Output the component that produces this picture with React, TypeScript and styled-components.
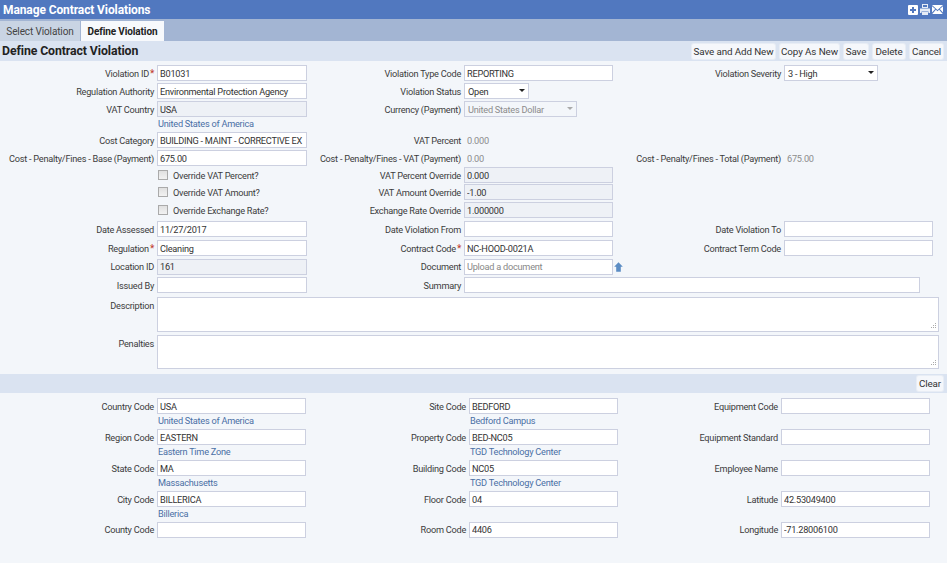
import React from "react";
import styled, { createGlobalStyle } from "styled-components";

const Global = createGlobalStyle`
  html, body { margin: 0; padding: 0; height: 100%; background: #f3f6fa; overflow: hidden; }
  body, input, select, textarea, button { font-family: Roboto, "Noto Sans", sans-serif; font-size: 9.2px; letter-spacing: -0.25px; }
  #root { height: 100%; }
`;

const Page = styled.div`
  width: 947px;
  height: 563px;
  display: flex;
  flex-direction: column;
  background: #f3f6fa;
  color: #3c3c3c;
`;
const TitleBar = styled.header`
  height: 19px;
  flex: none;
  background: #5178bf;
  color: #fff;
  display: flex;
  align-items: center;
  justify-content: space-between;
  padding: 0 4px 0 3px;
  font-size: 12px;
  font-weight: 700;
  letter-spacing: -0.1px;
`;
const TitleIcons = styled.div`
  display: flex;
  gap: 2px;
  align-items: center;
`;
const TabBar = styled.nav`
  height: 22px;
  flex: none;
  background: #a3b5d3;
  display: flex;
  align-items: flex-end;
  gap: 1px;
`;
const Tab = styled.div<{ $active?: boolean }>`
  height: 20px;
  width: ${(p) => (p.$active ? 83 : 80)}px;
  box-sizing: border-box;
  display: flex;
  align-items: center;
  justify-content: center;
  background: ${(p) => (p.$active ? "#f7f9fc" : "#c9d4e3")};
  color: ${(p) => (p.$active ? "#222" : "#444")};
  font-size: 10px;
  letter-spacing: -0.12px;
  font-weight: ${(p) => (p.$active ? 700 : 400)};
`;
const HeaderBand = styled.div`
  height: 20px;
  flex: none;
  background: #dae3f1;
  display: flex;
  align-items: center;
  justify-content: space-between;
  padding: 0 4px 0 2px;
`;
const SectionTitle = styled.h2`
  margin: 0;
  font-size: 12.3px;
  font-weight: 700;
  letter-spacing: -0.1px;
  color: #222;
`;
const Actions = styled.div`
  display: flex;
  gap: 5px;
`;
const ActionButton = styled.button<{ $w: number }>`
  width: ${(p) => p.$w}px;
  height: 15px;
  padding: 0;
  margin: 0;
  border: 0;
  border-radius: 2px;
  background: #f5f7fb;
  box-shadow: 0 0 0 1px #e8edf5;
  color: #333;
  font-size: 9.8px;
  letter-spacing: -0.1px;
  line-height: 15px;
`;
const FormArea = styled.section`
  padding-top: 3px;
  flex: none;
  height: 313px;
  box-sizing: border-box;
`;
const Row = styled.div<{ $h: number; $cols: string }>`
  display: grid;
  grid-template-columns: ${(p) => p.$cols};
  height: ${(p) => p.$h}px;
  align-items: center;
`;
const FieldLabel = styled.label`
  padding-right: 3px;
  white-space: nowrap;
  justify-self: end;
`;
const Required = styled.span`
  color: #c0392b;
  font-size: 10px;
  padding-left: 1px;
`;
const TextBox = styled.input<{ $w?: number }>`
  box-sizing: border-box;
  width: ${(p) => (p.$w ? `${p.$w}px` : "100%")};
  flex: none;
  height: 16px;
  padding: 0 2px;
  margin: 0;
  border: 1px solid #ccd0e0;
  background: ${(p) => (p.readOnly ? "#eef1f6" : "#fff")};
  color: #333;
  outline: none;
  &::placeholder { color: #888; }
`;
const Readout = styled.span`
  color: #8c8c8c;
  padding-left: 3px;
`;
const Link = styled.span`
  color: #4a6fa5;
  padding-left: 1px;
  align-self: start;
  line-height: 11px;
`;
const SelectWrap = styled.div<{ $w: number; $disabled?: boolean }>`
  position: relative;
  width: ${(p) => p.$w}px;
  height: 16px;
  &::after {
    content: "";
    position: absolute;
    right: 4px;
    top: 6px;
    border-left: 3px solid transparent;
    border-right: 3px solid transparent;
    border-top: 3px solid ${(p) => (p.$disabled ? "#aaa" : "#222")};
  }
`;
const Select = styled.select`
  appearance: none;
  box-sizing: border-box;
  width: 100%;
  height: 16px;
  margin: 0;
  padding: 1px 3px 0;
  border: 1px solid #ccd0e0;
  border-radius: 0;
  background: #fff;
  color: #333;
  outline: none;
  &:disabled { color: #8c8c8c; background: #f3f6fa; opacity: 1; }
`;
const CheckLine = styled.label`
  display: flex;
  align-items: center;
  gap: 5px;
`;
const Check = styled.input`
  appearance: none;
  box-sizing: border-box;
  width: 10px;
  height: 10px;
  margin: 0 0 0 1px;
  border: 1px solid #aaa;
  background: linear-gradient(#e0e0e0, #f2f2f2);
`;
const UploadCell = styled.div`
  display: flex;
  align-items: center;
  gap: 1px;
`;
const UploadMark = styled.svg`
  flex: none;
`;
const AreaRow = styled.div<{ $h: number; $mt: number }>`
  display: grid;
  grid-template-columns: 157px 782px;
  height: ${(p) => p.$h}px;
  margin-top: ${(p) => p.$mt}px;
`;
const AreaLabel = styled(FieldLabel)`
  padding-top: 3px;
`;
const AreaField = styled.div`
  position: relative;
`;
const Area = styled.textarea`
  display: block;
  box-sizing: border-box;
  width: 782px;
  height: 100%;
  margin: 0;
  padding: 2px;
  border: 1px solid #ccd0e0;
  background: #fff;
  outline: none;
  resize: none;
`;
const GripMark = styled.svg`
  position: absolute;
  right: 2px;
  bottom: 2px;
`;
const ClearBand = styled(HeaderBand)`
  height: 19px;
  justify-content: flex-end;
`;
const LocationArea = styled.section`
  padding-top: 4px;
`;

const TOP = "157px 150px 157px 149px 171px 149px";
const LOW = "157px 149px 163px 149px 163px 149px";

type C = React.ReactNode;
const lab = (t: string, req?: boolean) => (
  <FieldLabel>
    {t}
    {req && <Required>*</Required>}
  </FieldLabel>
);
const box = (v: string, readOnly?: boolean) => <TextBox value={v} readOnly={readOnly} onChange={() => {}} />;
const ro = (v: string) => <Readout>{v}</Readout>;
const none = <span />;

const PlusIcon = () => (
  <svg width="10" height="10" viewBox="0 0 10 10">
    <path fill="#fff" fillRule="evenodd" d="M1 0h8a1 1 0 0 1 1 1v8a1 1 0 0 1-1 1H1a1 1 0 0 1-1-1V1a1 1 0 0 1 1-1zM4 2v2H2v2h2v2h2V6h2V4H6V2z" />
  </svg>
);
const PrintIcon = () => (
  <svg width="10" height="11" viewBox="0 0 10 11">
    <path fill="#e6ecf6" fillRule="evenodd" d="M2 0h6v4H2zM3 1v2h4V1zM0 4.500h10V9H8.500V7.500h-7V9H0zM2 8h6v3H2z" />
  </svg>
);
const MailIcon = () => (
  <svg width="11" height="9" viewBox="0 0 11 9">
    <path fill="#fff" d="M0 0h11L5.500 5zM0 1.200l3.200 2.900L0 7.600zM11 1.200v6.400L7.800 4.100zM3.900 4.800 5.500 6.200l1.600-1.400L10.800 9H0.200z" />
  </svg>
);
const UploadIcon = () => (
  <UploadMark width="9" height="10" viewBox="0 0 9 10">
    <path fill="#5b8cc4" d="M4.500 0.300 8.800 4.800H6.800V9.800H2.200V4.800H0.200z" />
  </UploadMark>
);
const Grip = () => (
  <GripMark width="7" height="7" viewBox="0 0 7 7">
    <path fill="#aaa" d="M5 0h1v1H5zM5 2h1v1H5zM3 2h1v1H3zM5 4h1v1H5zM3 4h1v1H3zM1 4h1v1H1z" />
  </GripMark>
);

const topRows: { h: number; cells: C[] }[] = [
  { h: 18, cells: [lab("Violation ID", true), box("B01031"), lab("Violation Type Code"), box("REPORTING"), lab("Violation Severity"),
    <SelectWrap $w={94}><Select defaultValue="3 - High"><option>3 - High</option></Select></SelectWrap>] },
  { h: 18, cells: [lab("Regulation Authority"), box("Environmental Protection Agency"), lab("Violation Status"),
    <SelectWrap $w={65}><Select defaultValue="Open"><option>Open</option></Select></SelectWrap>, none, none] },
  { h: 18, cells: [lab("VAT Country"), box("USA", true), lab("Currency (Payment)"),
    <SelectWrap $w={113} $disabled><Select disabled defaultValue="United States Dollar"><option>United States Dollar</option></Select></SelectWrap>, none, none] },
  { h: 13, cells: [none, <Link>United States of America</Link>, none, none, none, none] },
  { h: 18, cells: [lab("Cost Category"), box("BUILDING - MAINT - CORRECTIVE EX"), lab("VAT Percent"), ro("0.000"), none, none] },
  { h: 18, cells: [lab("Cost - Penalty/Fines - Base (Payment)"), box("675.00"), lab("Cost - Penalty/Fines - VAT (Payment)"), ro("0.00"), lab("Cost - Penalty/Fines - Total (Payment)"), ro("675.00")] },
  { h: 16, cells: [none, <CheckLine><Check type="checkbox" />Override VAT Percent?</CheckLine>, lab("VAT Percent Override"), box("0.000", true), none, none] },
  { h: 18, cells: [none, <CheckLine><Check type="checkbox" />Override VAT Amount?</CheckLine>, lab("VAT Amount Override"), box("-1.00", true), none, none] },
  { h: 18, cells: [none, <CheckLine><Check type="checkbox" />Override Exchange Rate?</CheckLine>, lab("Exchange Rate Override"), box("1.000000", true), none, none] },
  { h: 20, cells: [lab("Date Assessed"), box("11/27/2017"), lab("Date Violation From"), box(""), lab("Date Violation To"), box("")] },
  { h: 18, cells: [lab("Regulation", true), box("Cleaning"), lab("Contract Code", true), box("NC-HOOD-0021A"), lab("Contract Term Code"), box("")] },
  { h: 19, cells: [lab("Location ID"), box("161", true), lab("Document"),
    <UploadCell><TextBox $w={149} placeholder="Upload a document" onChange={() => {}} value="" /><UploadIcon /></UploadCell>, none, none] },
];

const lowRows: { h: number; cells: C[] }[] = [
  { h: 18, cells: [lab("Country Code"), box("USA"), lab("Site Code"), box("BEDFORD"), lab("Equipment Code"), box("")] },
  { h: 13, cells: [none, <Link>United States of America</Link>, none, <Link>Bedford Campus</Link>, none, none] },
  { h: 18, cells: [lab("Region Code"), box("EASTERN"), lab("Property Code"), box("BED-NC05"), lab("Equipment Standard"), box("")] },
  { h: 13, cells: [none, <Link>Eastern Time Zone</Link>, none, <Link>TGD Technology Center</Link>, none, none] },
  { h: 18, cells: [lab("State Code"), box("MA"), lab("Building Code"), box("NC05"), lab("Employee Name"), box("")] },
  { h: 13, cells: [none, <Link>Massachusetts</Link>, none, <Link>TGD Technology Center</Link>, none, none] },
  { h: 18, cells: [lab("City Code"), box("BILLERICA"), lab("Floor Code"), box("04"), lab("Latitude"), box("42.53049400")] },
  { h: 12.75, cells: [none, <Link>Billerica</Link>, none, none, none, none] },
  { h: 18, cells: [lab("County Code"), box(""), lab("Room Code"), box("4406"), lab("Longitude"), box("-71.28006100")] },
];

const renderRows = (rows: { h: number; cells: C[] }[], cols: string) =>
  rows.map((r, i) => (
    <Row key={i} $h={r.h} $cols={cols}>
      {r.cells.map((c, j) => (
        <React.Fragment key={j}>{c}</React.Fragment>
      ))}
    </Row>
  ));

export default function App() {
  return (
    <Page>
      <Global />
      <TitleBar>
        Manage Contract Violations
        <TitleIcons>
          <PlusIcon />
          <PrintIcon />
          <MailIcon />
        </TitleIcons>
      </TitleBar>
      <TabBar>
        <Tab>Select Violation</Tab>
        <Tab $active>Define Violation</Tab>
      </TabBar>
      <HeaderBand>
        <SectionTitle>Define Contract Violation</SectionTitle>
        <Actions>
          <ActionButton $w={83}>Save and Add New</ActionButton>
          <ActionButton $w={59}>Copy As New</ActionButton>
          <ActionButton $w={24}>Save</ActionButton>
          <ActionButton $w={32}>Delete</ActionButton>
          <ActionButton $w={33}>Cancel</ActionButton>
        </Actions>
      </HeaderBand>
      <FormArea>
        {renderRows(topRows, TOP)}
        <Row $h={18} $cols="157px 150px 157px 456px">
          {lab("Issued By")}
          {box("")}
          {lab("Summary")}
          {box("")}
        </Row>
        <AreaRow $h={35} $mt={3}>
          <AreaLabel>Description</AreaLabel>
          <AreaField><Area /><Grip /></AreaField>
        </AreaRow>
        <AreaRow $h={34} $mt={3}>
          <AreaLabel>Penalties</AreaLabel>
          <AreaField><Area /><Grip /></AreaField>
        </AreaRow>
      </FormArea>
      <ClearBand>
        <ActionButton $w={26}>Clear</ActionButton>
      </ClearBand>
      <LocationArea>{renderRows(lowRows, LOW)}</LocationArea>
    </Page>
  );
}
